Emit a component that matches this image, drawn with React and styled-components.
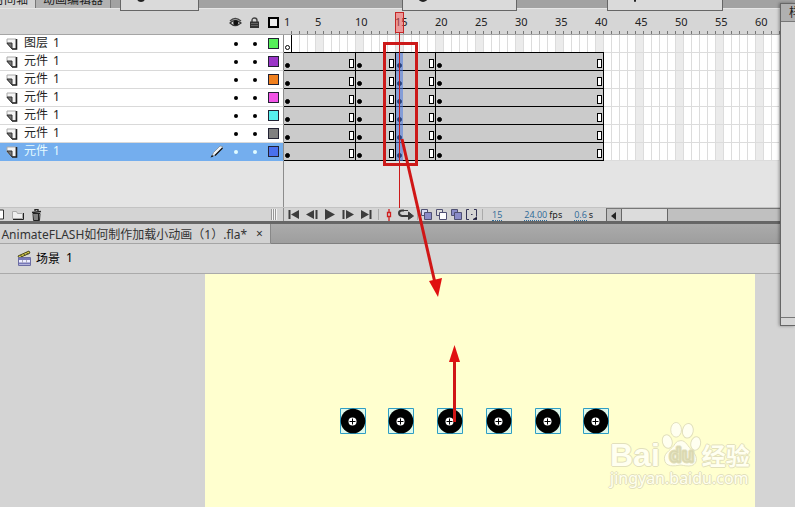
// Import Style
import styled, { createGlobalStyle, css } from 'styled-components';

// Constants
const frameWidth = 8;
const leftWidth = 284;
const rowHeight = 18;

const layers = [
    { name: '图层', color: '#55f05a', empty: true },
    { name: '元件', color: '#9b36c8' },
    { name: '元件', color: '#f0801e' },
    { name: '元件', color: '#f254e6' },
    { name: '元件', color: '#56f0ee' },
    { name: '元件', color: '#808080' },
    { name: '元件', color: '#4a70ee', active: true },
];

// Frame counts between two keyframes
const spans = [9, 5, 5, 21];

const marks = [5, 10, 15, 20, 25, 30, 35, 40, 45, 50, 55, 60];
const balls = [135, 183, 232, 281, 330, 378];

const GlobalStyle = createGlobalStyle`
    * {
        box-sizing: border-box;
    }
    body {
        margin: 0;
        background: #d4d4d4;
        font-family: "Noto Sans", "Noto Sans CJK SC", sans-serif;
        font-size: 12px;
        color: #222;
    }
    button {
        border: 0;
        padding: 0;
        margin: 0;
        background: none;
        font: inherit;
        color: inherit;
    }
`

const Page = styled.div`
    position: relative;
    display: flex;
    flex-direction: column;
    min-height: 100vh;
    overflow: hidden;
`

/* Top tabs */
const TopTabs = styled.div`
    display: flex;
    align-items: flex-end;
    height: 9px;
    background: #a2a2a2;
    border-bottom: 1px solid #e6e6e6;
    overflow: hidden;
`

const TopTab = styled.button`
    display: flex;
    align-items: flex-end;
    justify-content: flex-end;
    width: ${({ $width }) => $width}px;
    height: 18px;
    padding-right: 7px;
    padding-bottom: 2px;
    line-height: 12px;
    white-space: nowrap;
    background: ${({ $active }) => ($active ? '#d4d4d4' : '#b2b2b2')};
    border-right: 1px solid #777;
`

const Popup = styled.div`
    position: absolute;
    top: -4px;
    left: ${({ $left }) => $left}px;
    width: ${({ $width }) => $width}px;
    height: 15px;
    background: #dadada;
    border: 1px solid #666;

    &::after {
        content: '';
        position: absolute;
        top: 0;
        left: ${({ $dot }) => $dot}px;
        width: ${({ $dotWidth }) => $dotWidth}px;
        height: 5px;
        border-radius: 0 0 5px 5px;
        background: #222;
    }
`

/* Timeline */
const Row = styled.div`
    display: flex;
    height: ${rowHeight}px;
`

const HeaderRow = styled(Row)`
    height: 26px;
    background: #d6d6d6;
    border-bottom: 1px solid #a5a5a5;
`

const LeftCell = styled.div`
    display: flex;
    align-items: center;
    flex: none;
    width: ${leftWidth}px;
    padding-left: 6px;
    border-right: 1px solid #8c8c8c;
`

const HeadCell = styled(LeftCell)`
    padding-top: 1px;
    border-right-color: transparent;
`

const LayerCell = styled(LeftCell)`
    background: ${({ $active }) => ($active ? '#74aeee' : '#fff')};
    color: ${({ $active }) => ($active ? '#e6fbff' : '#222')};
    border-bottom: 1px solid ${({ $active }) => ($active ? '#74aeee' : '#d9d9d9')};
`

const LayerName = styled.span`
    display: flex;
    gap: 5px;
    flex: 1;
    padding-left: 6px;
    padding-bottom: 2px;
    line-height: 14px;
`

const IconSlot = styled.span`
    display: flex;
    align-items: center;
    justify-content: center;
    width: 19px;
    height: 17px;
`

const LayerDot = styled.i`
    width: 4px;
    height: 4px;
    border-radius: 50%;
    background: ${({ $active }) => ($active ? '#dffbff' : '#000')};
`

const Swatch = styled.i`
    width: 11px;
    height: 11px;
    border: 1px solid #223;
    background: ${({ $color }) => $color};
`

const OutlineBox = styled(Swatch)`
    border: 2px solid #000;
`

const Ruler = styled.div`
    display: flex;
    flex: 1;
    overflow: hidden;
    line-height: 26px;
    background: repeating-linear-gradient(90deg, transparent 0 7px, #777 7px 8px) 0 100% / 100% 3px no-repeat;
`

const RulerMark = styled.span`
    flex: none;
    width: ${({ $width }) => $width}px;
    font-size: 11px;
    white-space: nowrap;
`

const gridLines = css`
    background:
        repeating-linear-gradient(90deg, transparent 0 7px, #dcdcdc 7px 8px),
        repeating-linear-gradient(90deg, #fff 0 32px, #ebebeb 32px 40px);
`

const Track = styled.div`
    display: flex;
    flex: 1;
    overflow: hidden;
    ${gridLines}
    box-shadow: inset 0 -1px #dcdcdc;
`

const Span = styled.div`
    display: flex;
    align-items: flex-end;
    justify-content: space-between;
    flex: none;
    width: ${({ $frames }) => $frames * frameWidth}px;
    padding: 0 1px 1px 1px;
    background: ${({ $clear }) => ($clear ? 'transparent' : '#cbcbcb')};
    border-bottom: 1px solid #000;
    border-right: ${({ $open }) => ($open ? 0 : 1)}px solid #000;
`

const KeyDot = styled.i`
    width: 5px;
    height: 5px;
    margin-bottom: 1px;
    border-radius: 50%;
    background: ${({ $hollow }) => ($hollow ? '#fff' : '#000')};
    border: 1px solid #000;
`

const EndBox = styled.i`
    width: 5px;
    height: 9px;
    margin-bottom: 1px;
    background: #fff;
    border: 1px solid #000;
`

const BlankRow = styled(Row)`
    height: 46px;
    background: #e4e4e4;
`

/* Timeline footer */
const Footer = styled(Row)`
    height: 17px;
    background: #d4d4d4;
    border-top: 1px solid #c3c3c3;
    border-bottom: 3px solid #666;
`

const FooterLeft = styled(LeftCell)`
    padding: 0 6px 0 0;
    gap: 6px;
`

const Tools = styled.div`
    display: flex;
    align-items: center;
    flex: none;
    width: 322px;
    padding-left: 1px;
`

const ToolButton = styled.button`
    display: flex;
    align-items: center;
    justify-content: center;
    width: ${({ $width }) => $width || 18}px;
    height: 13px;
`

const Grip = styled.i`
    width: 6px;
    height: 11px;
    margin-left: auto;
    background: repeating-linear-gradient(90deg, #999 0 1px, #f5f5f5 1px 2px);
`

const Divider = styled.i`
    width: 1px;
    height: 11px;
    margin: 0 ${({ $right }) => $right || 1}px 0 3px;
    background: #aaa;
`

const Value = styled.button`
    margin-right: ${({ $gap }) => $gap || 0}px;
    font-family: "Open Sans", sans-serif;
    font-size: 9px;
    line-height: 11px;
    color: #2d6996;
    border-bottom: 1px dotted #2d6996;
`

const Unit = styled.span`
    margin: 0 ${({ $gap }) => $gap || 0}px 0 2px;
    font-size: 9px;
    line-height: 11px;
`

const Scroller = styled.div`
    display: flex;
    flex: 1;
    background: #c0c0c0;
    border-top: 1px solid #777;
    border-left: 1px solid #666;
`

const ScrollThumb = styled.div`
    width: 47px;
    background: #dcdcdc;
    border-left: 1px solid #666;
    border-right: 1px solid #666;
`

/* Document */
const DocTabs = styled.div`
    display: flex;
    height: 20px;
    background: linear-gradient(#ababab, #9e9e9e);
    border-bottom: 1px solid #808080;
`

const DocTab = styled.div`
    display: flex;
    align-items: center;
    justify-content: flex-end;
    width: 271px;
    height: 20px;
    padding-right: 6px;
    overflow: hidden;
    white-space: nowrap;
    color: #333;
    background: #d2d2d2;
    border-right: 1px solid #888;
    border-bottom: 1px solid #a5a5a5;
`

const CloseButton = styled.button`
    width: 9px;
    margin-left: 8px;
    line-height: 14px;
`

const SceneBar = styled.div`
    display: flex;
    align-items: center;
    gap: 4px;
    height: 30px;
    padding-left: 17px;
    background: #d6d6d6;
    border-bottom: 1px solid #aaa;
    color: #000;
`

const SceneName = styled.span`
    display: flex;
    gap: 6px;
    padding-bottom: 2px;
`

const Stage = styled.main`
    position: relative;
    flex: 1;
    min-height: 233px;
    margin: 0 40px 0 205px;
    background: #ffffcf;
`

const Ball = styled.svg`
    position: absolute;
    top: 134px;
    left: ${({ $left }) => $left}px;
`

const Watermark = styled.div`
    position: absolute;
    right: 3px;
    top: 147px;
    width: 142px;
    color: #fffff0;
    white-space: nowrap;
    text-shadow: 1px 0 #e2e0bc, -1px 0 #e2e0bc, 0 1px #e2e0bc, 0 -1px #e2e0bc;
`

const Brand = styled.div`
    display: flex;
    align-items: flex-end;
    height: 46px;
    font-family: "Liberation Sans", sans-serif;
    font-size: 32px;
    font-weight: bold;
    line-height: 24px;
`

const BrandZh = styled.span`
    font-family: "Noto Sans CJK SC", sans-serif;
    font-size: 24px;
    line-height: 24px;
`

const Site = styled.div`
    margin-top: 1px;
    font-size: 16px;
    line-height: 20px;
`

/* Docked panel */
const SidePanel = styled.aside`
    position: absolute;
    top: 3px;
    right: 0;
    width: 15px;
    height: 323px;
    overflow: hidden;
    background: #d6d6d6;
    border: 1px solid #666;
    border-right: 0;
    box-shadow: -1px 0 3px rgba(0, 0, 0, 0.35);

    &::after {
        content: '';
        position: absolute;
        left: 0;
        right: 0;
        bottom: 7px;
        height: 1px;
        background: #777;
    }
`

const SideTitle = styled.div`
    height: 18px;
    padding-left: 8px;
    line-height: 18px;
    background: #b0b0b0;
    border-bottom: 1px solid #777;
`

/* Playhead and arrows drawn over the timeline */
const Playhead = styled.div`
    position: absolute;
    top: 12px;
    left: 395px;
    width: 9px;
    height: 21px;
    background: rgba(255, 90, 90, 0.5);
    border: 1px solid #c42626;

    &::after {
        content: '';
        position: absolute;
        top: 20px;
        left: 3px;
        width: 1px;
        height: 175px;
        background: #cc1a1a;
    }
`

const Selection = styled.div`
    position: absolute;
    top: 53px;
    left: 396px;
    width: 7px;
    height: 108px;
    background: rgba(72, 120, 225, 0.55);
`

const Highlight = styled.div`
    position: absolute;
    top: 42px;
    left: 383px;
    width: 35px;
    height: 124px;
    border: 3px solid #cc1a1a;
`

const Arrows = styled.svg`
    position: absolute;
    top: 0;
    left: 0;
    pointer-events: none;
`

const LayerIcon = () => (
    <svg width="12" height="12" viewBox="0 0 12 12">
        <path d="M1 1h9v10H6L1 6z" fill="#f4f4f4" stroke="#aaa" />
        <path d="M10.5 1v10H6" fill="none" stroke="#222" strokeWidth="1.6" />
        <path d="M1 5h5v6z" fill="#777" stroke="#333" />
    </svg>
)

const EyeIcon = () => (
    <svg width="13" height="11" viewBox="0 0 13 11">
        <path d="M1 6Q6 1 12 6Q6 11 1 6z" fill="#ddd" stroke="#333" strokeWidth="1.2" />
        <path d="M1 4Q6 -1 12 4" fill="none" stroke="#444" strokeWidth="1.3" />
        <circle cx="6.8" cy="5.8" r="2.5" fill="#111" />
    </svg>
)

const LockIcon = () => (
    <svg width="9" height="11" viewBox="0 0 9 11">
        <path d="M2 5V3.5Q2 1 4.5 1T7 3.5V5" fill="none" stroke="#444" strokeWidth="1.4" />
        <path d="M0 4.5h9V11H0z" fill="#333" />
        <path d="M1 6.5h7M1 8.5h7" stroke="#777" strokeWidth=".7" />
    </svg>
)

const PencilIcon = () => (
    <svg width="14" height="13" viewBox="0 0 14 13">
        <path d="M2 11L3.500 7.500L10 1L12.500 1.500L12 4L5.500 10z" fill="#eef3f8" stroke="#777" strokeWidth=".6" />
        <path d="M5 10.500L12.500 3" fill="none" stroke="#111" strokeWidth="1.3" />
        <path d="M.500 12.500L2 10L3.500 11.500z" fill="#111" />
    </svg>
)

// Playback icons share the same triangle, mirrored for the backward ones
const PlayIcon = ({ back, bar }) => (
    <svg width="12" height="11" viewBox="0 0 12 11">
        <g transform={back ? 'matrix(-1 0 0 1 12 0)' : undefined} fill="#3c3c3c">
            {bar === 'front' ? <path d="M1 1l8 4.5L1 10zM9.5 1h2v9h-2z" /> : null}
            {bar === 'rear' ? <path d="M.5 1h2v9h-2zM4 1l8 4.5L4 10z" /> : null}
            {!bar ? <path d="M1 0l10 5.5L1 11z" /> : null}
        </g>
    </svg>
)

const SquaresIcon = ({ rear, front }) => (
    <svg width="11" height="11" viewBox="0 0 11 11" stroke="#4f5073">
        <path d="M.5 .5h6v6h-6z" fill={rear} />
        <path d="M3.5 3.5h7v7h-7z" fill={front} />
    </svg>
)

const SceneIcon = () => (
    <svg width="15" height="17" viewBox="0 0 15 17">
        <path d="M1 6L12 1L13 3L2 8z" fill="#d9cf48" stroke="#4c4820" />
        <path d="M3.5 5l1.5 2M6.5 3.5L8 5.5M9.5 2.5l1.5 2" stroke="#4c4820" />
        <path d="M1.5 7.5h12v8h-12z" fill="#eef" stroke="#6b6ca3" />
        <path d="M2 9h11M2 13.5h11" stroke="#7778b8" strokeWidth="2" />
        <path d="M5.5 10v3M9.5 10v3" stroke="#aab" />
    </svg>
)

const PawIcon = () => (
    <svg width="42" height="46" viewBox="0 0 42 47" fill="#fffff0" stroke="#e2e0bc">
        <ellipse cx="7" cy="21" rx="5" ry="7" transform="rotate(-15 7 21)" />
        <ellipse cx="16" cy="9" rx="5.5" ry="7.5" />
        <ellipse cx="28" cy="10" rx="5.5" ry="7.5" transform="rotate(10 28 10)" />
        <ellipse cx="36" cy="23" rx="5" ry="7" transform="rotate(12 36 23)" />
        <path d="M21 20C26 20 28 26 33 31C39 37 38 46 29 46C24 46 23 45 20 45C15 46 4 48 4 38C4 32 12 29 15 23Q17 20 21 20z" />
        <text x="9" y="42" fontFamily="Open Sans" fontSize="20" fontWeight="bold" fill="#ffffd8" stroke="#d8d6ae">du</text>
    </svg>
)

function LayerRow({ name, color, active, empty }) {
    return (
        <Row>
            <LayerCell $active={active}>
                <LayerIcon />
                <LayerName>
                    <span>{name}</span>
                    <span>1</span>
                </LayerName>
                {active ? <IconSlot><PencilIcon /></IconSlot> : null}
                <IconSlot><LayerDot $active={active} /></IconSlot>
                <IconSlot><LayerDot $active={active} /></IconSlot>
                <IconSlot><Swatch $color={color} /></IconSlot>
            </LayerCell>
            <Track>
                {empty ? (
                    <>
                        <Span $frames={1} $clear><KeyDot $hollow /></Span>
                        <Span $frames={39} $clear $open />
                    </>
                ) : (
                    spans.map((frames, index) => (
                        <Span key={index} $frames={frames}>
                            <KeyDot />
                            <EndBox />
                        </Span>
                    ))
                )}
            </Track>
        </Row>
    )
}

function TimelineFooter() {
    return (
        <Footer>
            <FooterLeft>
                <ToolButton $width={5} aria-label="New layer">
                    <svg width="5" height="11"><path d="M0 1h3.5v9H0" fill="#fff" stroke="#333" /></svg>
                </ToolButton>
                <ToolButton $width={14} aria-label="New folder">
                    <svg width="12" height="10">
                        <path d="M.5 1.5h4l1 2h5v5h-10z" fill="#eee" stroke="#aaa" />
                        <path d="M1 9.5h10.500V3" fill="none" stroke="#222" />
                    </svg>
                </ToolButton>
                <ToolButton $width={11} aria-label="Delete">
                    <svg width="11" height="12" fill="none" stroke="#222">
                        <path d="M1 3.500L10 2.500M4 2V.5h3V2" strokeWidth="1.4" />
                        <path d="M2 4.500h7L8.500 11.500h-6z" fill="#ddd" />
                        <path d="M4 5v6M6 5v6M7.500 5v6" />
                    </svg>
                </ToolButton>
                <Grip />
            </FooterLeft>
            <Tools>
                <ToolButton aria-label="First frame"><PlayIcon back bar="front" /></ToolButton>
                <ToolButton aria-label="Step back"><PlayIcon back bar="rear" /></ToolButton>
                <ToolButton aria-label="Play"><PlayIcon /></ToolButton>
                <ToolButton aria-label="Step forward"><PlayIcon bar="rear" /></ToolButton>
                <ToolButton aria-label="Last frame"><PlayIcon bar="front" /></ToolButton>
                <Divider />
                <ToolButton $width={17} aria-label="Center frame">
                    <svg width="12" height="12">
                        <path d="M6 0v3M6 8v4M4.5 3.5h3v4h-3z" fill="none" stroke="#d02020" strokeWidth="1.3" />
                    </svg>
                </ToolButton>
                <ToolButton $width={17} aria-label="Loop">
                    <svg width="16" height="11">
                        <path d="M6 1.500H4Q1 1.500 1 4T4 7h8" fill="none" stroke="#3c3c3c" strokeWidth="2" />
                        <path d="M5 1.500h5M10.500 3l5 4l-5 3.500z" fill="#3c3c3c" stroke="#3c3c3c" />
                    </svg>
                </ToolButton>
                <Divider />
                <ToolButton $width={15} aria-label="Onion skin"><SquaresIcon rear="#d8dcf4" front="#8a8cc8" /></ToolButton>
                <ToolButton $width={15} aria-label="Onion skin outlines"><SquaresIcon rear="#ddd" front="#fff" /></ToolButton>
                <ToolButton $width={15} aria-label="Edit multiple frames"><SquaresIcon rear="#8a8cc8" front="#8a8cc8" /></ToolButton>
                <ToolButton $width={15} aria-label="Modify markers">
                    <svg width="11" height="11" fill="none" stroke="#335">
                        <path d="M3 .5H.5v10H3M8 .5h2.500v7M5 5.500h1.500" />
                        <path d="M7 10.500h4V8z" fill="#000" />
                    </svg>
                </ToolButton>
                <Divider $right={9} />
                <Value $gap={22}>15</Value>
                <Value>24.00</Value>
                <Unit $gap={12}>fps</Unit>
                <Value>0.6</Value>
                <Unit>s</Unit>
            </Tools>
            <Scroller>
                <ToolButton $width={14} aria-label="Scroll left">
                    <svg width="6" height="8"><path d="M5 0v8L0 4z" fill="#222" /></svg>
                </ToolButton>
                <ScrollThumb />
            </Scroller>
        </Footer>
    )
}

function App() {
    return (
        <Page>
            <GlobalStyle />
            <TopTabs>
                <TopTab $width={36} $active>时间轴</TopTab>
                <TopTab $width={75}>动画编辑器</TopTab>
            </TopTabs>
            <Popup $left={120} $width={79} $dot={16} $dotWidth={8} />
            <Popup $left={402} $width={115} $dot={15} $dotWidth={10} />
            <Popup $left={607} $width={116} $dot={26} $dotWidth={2} />

            <HeaderRow>
                <HeadCell>
                    <LayerName />
                    <IconSlot><EyeIcon /></IconSlot>
                    <IconSlot><LockIcon /></IconSlot>
                    <IconSlot><OutlineBox $color="#eee" /></IconSlot>
                </HeadCell>
                <Ruler>
                    <RulerMark $width={31}>1</RulerMark>
                    {marks.map((mark) => (
                        <RulerMark key={mark} $width={5 * frameWidth}>{mark}</RulerMark>
                    ))}
                </Ruler>
            </HeaderRow>

            {layers.map((layer, index) => (
                <LayerRow key={index} {...layer} />
            ))}
            <BlankRow><LeftCell /></BlankRow>
            <TimelineFooter />

            <DocTabs>
                <DocTab>
                    <span>AnimateFLASH如何制作加载小动画（1）.fla*</span>
                    <CloseButton aria-label="Close">×</CloseButton>
                </DocTab>
            </DocTabs>
            <SceneBar>
                <SceneIcon />
                <SceneName>
                    <span>场景</span>
                    <span>1</span>
                </SceneName>
            </SceneBar>

            <Stage>
                {balls.map((left) => (
                    <Ball key={left} $left={left} width="26" height="26">
                        <path d="M.5 .5h25v25H.5z" fill="#dff8ea" stroke="#2f9ec4" />
                        <circle cx="13" cy="13" r="12.300" />
                        <circle cx="12.500" cy="13.500" r="4" fill="#fff" />
                        <path d="M12.500 10.500v6M9.500 13.500h6" stroke="#000" />
                    </Ball>
                ))}
                <Watermark>
                    <Brand>
                        <span>Bai</span>
                        <PawIcon />
                        <BrandZh>经验</BrandZh>
                    </Brand>
                    <Site>jingyan.baidu.com</Site>
                </Watermark>
            </Stage>

            <SidePanel>
                <SideTitle>样</SideTitle>
            </SidePanel>

            <Selection />
            <Playhead />
            <Highlight />
            <Arrows width="480" height="440" stroke="#d01616" fill="#e01010">
                <path d="M402 139L435 283" strokeWidth="3" />
                <path d="M429 281L442 278L438 297z" stroke="none" />
                <path d="M454.500 422V360" strokeWidth="3" />
                <path d="M449 362L454.500 345L460 362z" stroke="none" />
            </Arrows>
        </Page>
    )
}

export default App;
